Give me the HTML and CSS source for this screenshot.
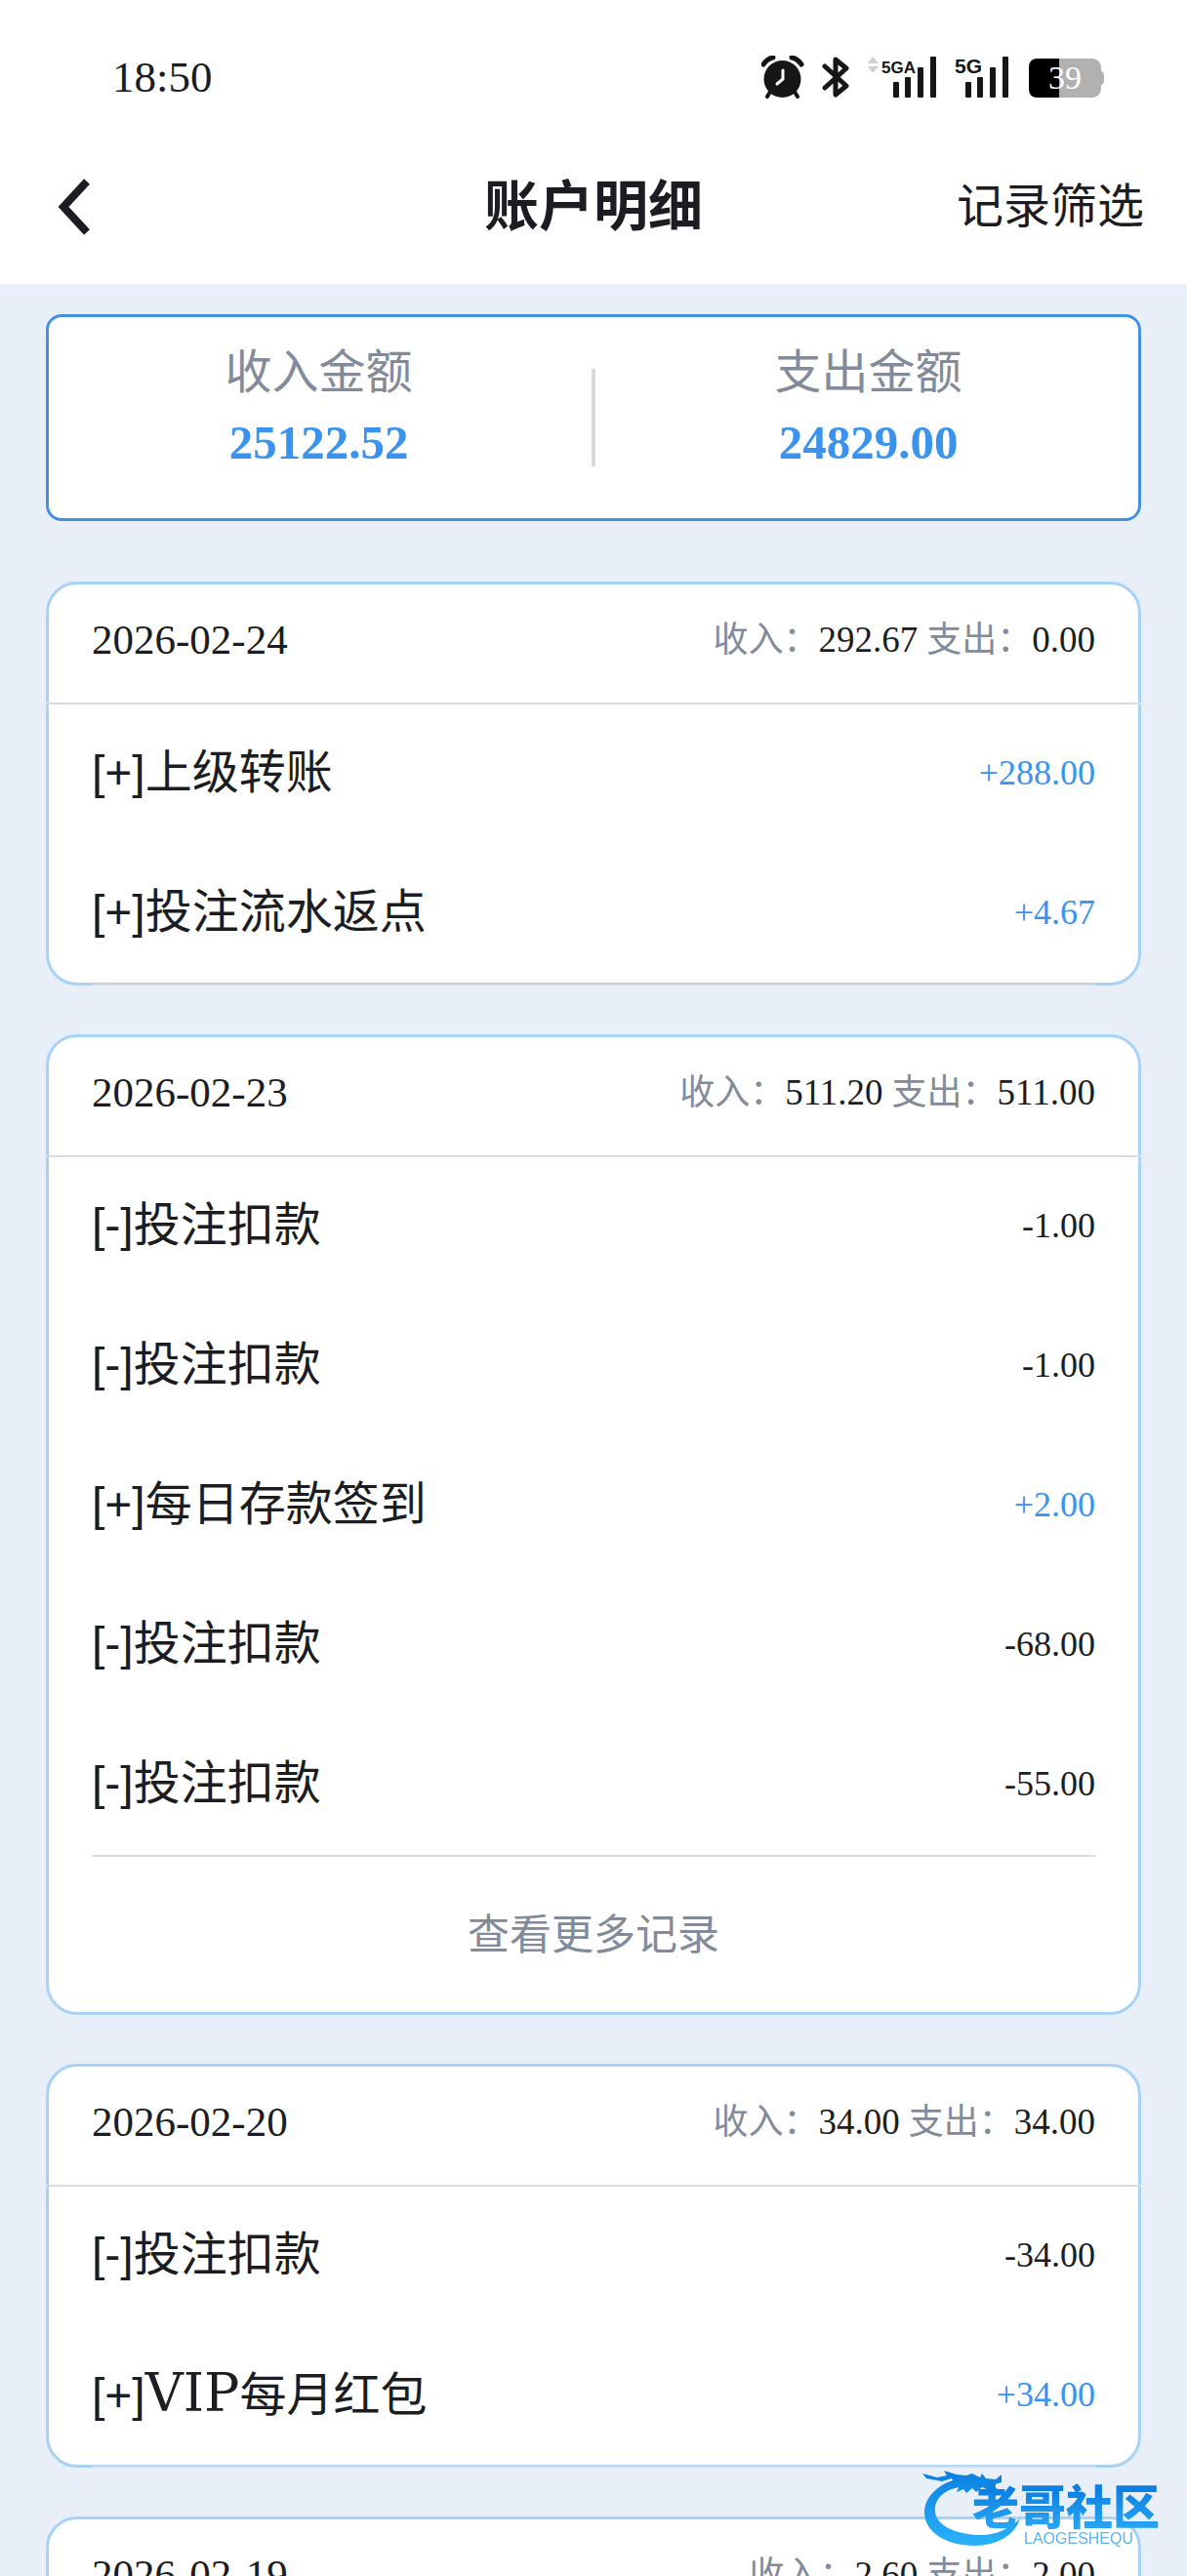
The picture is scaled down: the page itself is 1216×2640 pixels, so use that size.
FILE: index.html
```html
<!DOCTYPE html>
<html lang="zh-CN">
<head>
    <meta charset="UTF-8">
    <meta name="viewport" content="width=device-width, initial-scale=1">
    <title>账户明细</title>
    <link rel="stylesheet" href="styles.css">
</head>
<body>
    <div class="status-bar">
        <span class="clock">18:50</span>
        <div class="status-icons">
            <!-- alarm -->
            <svg width="44" height="44" viewBox="0 0 44 44">
                <path d="M9 37L6 42M34 37L37 42" stroke="#161616" stroke-width="4" stroke-linecap="round"/>
                <circle cx="21.500" cy="24" r="19" fill="#161616"/>
                <path d="M2 9Q6 3 12 2" stroke="#161616" stroke-width="5" stroke-linecap="round" fill="none"/>
                <path d="M31 2Q37 3 41 9" stroke="#161616" stroke-width="5" stroke-linecap="round" fill="none"/>
                <path d="M22 15V24L16 29" stroke="#fff" stroke-width="3" stroke-linecap="round" fill="none"/>
            </svg>
            <!-- bluetooth -->
            <svg width="28" height="44" viewBox="0 0 28 44">
                <path d="M3 11L25 31L14 40V4L25 13L3 33" stroke="#161616" stroke-width="5" stroke-linecap="round" stroke-linejoin="round" fill="none"/>
            </svg>
            <svg width="72" height="44" viewBox="0 0 72 44">
                <path d="M6 1L12 8H1ZM1 11H12L6 18Z" fill="#d0d0d0"/>
                <text x="15" y="18" class="net">5GA</text>
                <g fill="#161616">
                    <rect x="27" y="27" width="6" height="16" rx="1"/>
                    <rect x="39" y="22" width="6" height="21" rx="1"/>
                    <rect x="52" y="12" width="6" height="31" rx="1"/>
                    <rect x="65" y="1" width="6" height="42" rx="1"/>
                </g>
            </svg>
            <svg width="58" height="44" viewBox="0 0 58 44">
                <text x="0" y="18" class="net net-lg">5G</text>
                <g fill="#161616">
                    <rect x="11" y="27" width="6" height="16" rx="1"/>
                    <rect x="23" y="22" width="6" height="21" rx="1"/>
                    <rect x="36" y="12" width="6" height="31" rx="1"/>
                    <rect x="49" y="1" width="6" height="42" rx="1"/>
                </g>
            </svg>
            <!-- battery -->
            <svg width="77" height="44" viewBox="0 0 77 44">
                <rect x="0" y="3" width="74" height="40" rx="9" fill="#b1b1b1"/>
                <path d="M73 15Q77 17 77 20V26Q77 29 73 31Z" fill="#b1b1b1"/>
                <path d="M31 3H9Q0 3 0 12V34Q0 43 9 43H31Z"/>
                <text x="37" y="34" text-anchor="middle" class="battery-num">39</text>
            </svg>
        </div>
    </div>

    <header class="nav">
        <button class="back" aria-label="返回">
            <svg width="34" height="60" viewBox="0 0 34 60">
                <path d="M30 4L6 30L30 56" stroke="#1b1d22" stroke-width="8" fill="none"/>
            </svg>
        </button>
        <h1>账户明细</h1>
        <button class="filter">记录筛选</button>
    </header>

    <main>
        <section class="summary">
            <div class="summary-item">
                <p>收入金额</p>
                <strong>25122.52</strong>
            </div>
            <div class="summary-item">
                <p>支出金额</p>
                <strong>24829.00</strong>
            </div>
        </section>

        <section class="card">
            <div class="card-head">
                <h2>2026-02-24</h2>
                <div class="totals">收入：<b>292.67</b> 支出：<b>0.00</b></div>
            </div>
            <ul>
                <li><span>[+]上级转账</span><span class="amount plus">+288.00</span></li>
                <li><span>[+]投注流水返点</span><span class="amount plus">+4.67</span></li>
            </ul>
        </section>

        <section class="card has-more">
            <div class="card-head">
                <h2>2026-02-23</h2>
                <div class="totals">收入：<b>511.20</b> 支出：<b>511.00</b></div>
            </div>
            <ul>
                <li><span>[-]投注扣款</span><span class="amount">-1.00</span></li>
                <li><span>[-]投注扣款</span><span class="amount">-1.00</span></li>
                <li><span>[+]每日存款签到</span><span class="amount plus">+2.00</span></li>
                <li><span>[-]投注扣款</span><span class="amount">-68.00</span></li>
                <li><span>[-]投注扣款</span><span class="amount">-55.00</span></li>
            </ul>
            <button class="more">查看更多记录</button>
        </section>

        <section class="card">
            <div class="card-head">
                <h2>2026-02-20</h2>
                <div class="totals">收入：<b>34.00</b> 支出：<b>34.00</b></div>
            </div>
            <ul>
                <li><span>[-]投注扣款</span><span class="amount">-34.00</span></li>
                <li><span>[+]<span class="latin">VIP</span>每月红包</span><span class="amount plus">+34.00</span></li>
            </ul>
        </section>

        <section class="card">
            <div class="card-head">
                <h2>2026-02-19</h2>
                <div class="totals">收入：<b>2.60</b> 支出：<b>2.00</b></div>
            </div>
        </section>
    </main>

    <div class="watermark">
        <svg width="256" height="80" viewBox="0 0 256 80">
            <defs>
                <linearGradient id="wave" x1="0" y1="0" x2="0" y2="1">
                    <stop offset="0" stop-color="#0a7fe0"/>
                    <stop offset="1" stop-color="#2bb2fa"/>
                </linearGradient>
                <linearGradient id="word" x1="0" y1="0" x2="0" y2="1">
                    <stop offset="0.3" stop-color="#0d80e2"/>
                    <stop offset="0.9" stop-color="#2aa9f5"/>
                </linearGradient>
            </defs>
            <path fill="url(#wave)" d="M36 10C18 16 7 29 7 43C7 63 30 77 58 77C81 77 100 66 105 49C94 60 78 67 62 66C38 65 19 56 18 42C17 29 27 20 42 17L40 22L47 19L50 23L56 18L60 22L66 17L73 20L82 19L76 15L86 12V4L80 9L70 8L66 3L64 7L56 3L50 5L40 4L27 0L30 5L20 7L5 3L9 8L25 11L35 8Z"/>
            <text x="56" y="55" class="wm-name" fill="url(#word)">老哥社区</text>
            <text x="109" y="75" class="wm-sub">LAOGESHEQU</text>
        </svg>
    </div>
</body>
</html>
```

FILE: styles.css
```css
:root {
    --bg-color: #e9eff8;
    --text-color: #1b1d22;
    --muted-color: #838a99;
    --blue: #3a93ee;
    --card-border: #a6d3f7;
    --line: #d9dce1;
}
* {
    box-sizing: border-box;
    margin: 0;
    padding: 0;
}
body {
    display: flex;
    flex-direction: column;
    height: 100vh;
    overflow: hidden;
    background-color: #fff;
    color: var(--text-color);
    font-family: "Liberation Sans", "Noto Sans CJK SC", sans-serif;
    font-size: 48px;
    line-height: 56px;
}
button {
    border: none;
    background: none;
    color: inherit;
    font: inherit;
    cursor: pointer;
}
.status-bar {
    display: flex;
    flex-shrink: 0;
    justify-content: space-between;
    align-items: center;
    height: 132px;
    padding: 26px 85px 0 115px;
}
.clock {
    font: 45px "Liberation Serif", serif;
}
.status-icons {
    display: flex;
    align-items: center;
    gap: 18px;
}
.net {
    font: bold 17px "Liberation Sans", sans-serif;
    fill: #161616;
}
.net-lg {
    font-size: 21px;
}
.battery-num {
    font: 34px "Liberation Serif", serif;
    fill: #fff;
}
.nav {
    display: grid;
    grid-template-columns: 1fr auto 1fr;
    flex-shrink: 0;
    align-items: center;
    height: 159px;
    padding: 0 44px;
}
.nav h1 {
    font-size: 56px;
    line-height: 80px;
}
.back {
    justify-self: start;
    padding: 0 15px;
    line-height: 0;
}
.filter {
    justify-self: end;
}
main {
    flex: 1;
    min-height: 0;
    padding: 31px 47px 0;
    overflow-y: auto;
    scrollbar-width: none;
    background-color: var(--bg-color);
}
.summary {
    display: flex;
    gap: 10px;
    margin-bottom: 62px;
    padding: 21px 0 41px;
    border: 3px solid #4391e2;
    border-radius: 16px;
    background-color: #fff;
    text-align: center;
}
.summary-item {
    position: relative;
    flex: 1;
}
.summary-item + .summary-item::before {
    content: "";
    position: absolute;
    left: -7px;
    top: 32px;
    width: 4px;
    height: 100px;
    background-color: #d5d8df;
}
.summary p {
    color: var(--muted-color);
    line-height: 72px;
}
.summary strong {
    display: block;
    color: var(--blue);
    font: bold 49px/72px "Liberation Serif", serif;
}
.card {
    margin-bottom: 50px;
    border: 3px solid var(--card-border);
    border-radius: 32px;
    background-color: #fff;
}
.card-head {
    display: flex;
    justify-content: space-between;
    align-items: center;
    height: 123px;
    margin: 0 -3px;
    padding: 0 47px 8px;
    border-bottom: 2px solid var(--line);
}
.card-head h2 {
    font: 43px "Liberation Serif", serif;
}
.totals {
    color: var(--muted-color);
    font-family: "Liberation Serif", "Noto Sans CJK SC", serif;
    font-size: 36px;
}
.totals b {
    color: var(--text-color);
    font-size: 37px;
    font-weight: normal;
}
.card ul {
    margin: 0 44px -3px;
    border-bottom: 2px solid #cfdae5;
    list-style: none;
}
.card.has-more ul {
    margin-bottom: 0;
    border-color: var(--line);
}
.card li {
    display: flex;
    justify-content: space-between;
    align-items: center;
    height: 143px;
    padding-bottom: 4px;
}
.latin {
    font-family: "DejaVu Serif", serif;
    font-size: 54px;
}
.amount {
    font: 36px "Liberation Serif", serif;
}
.plus {
    color: var(--blue);
}
.more {
    display: block;
    width: 100%;
    height: 159px;
    color: var(--muted-color);
    font-size: 43px;
}
.watermark {
    position: fixed;
    right: 20px;
    bottom: 28px;
    line-height: 0;
    pointer-events: none;
}
.wm-name {
    font: 900 48px "Noto Sans CJK SC", sans-serif;
}
.wm-sub {
    font: 16px "Liberation Sans", sans-serif;
    fill: #5fb4ee;
}
```
